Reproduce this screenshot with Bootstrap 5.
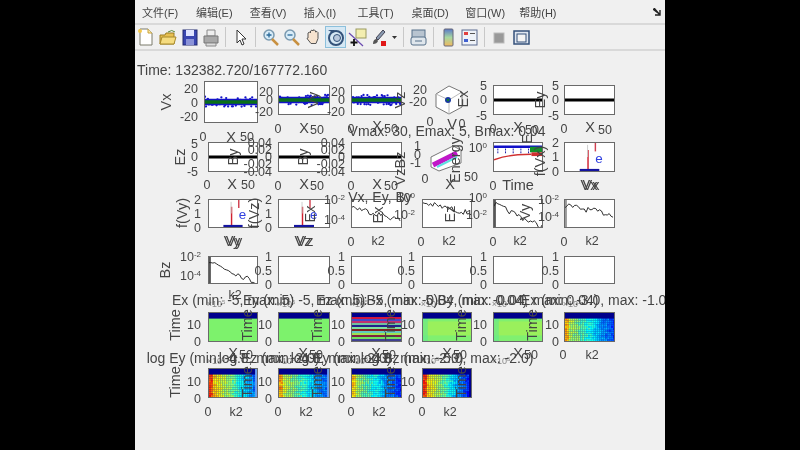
<!DOCTYPE html>
<html lang="zh">
<head>
<meta charset="UTF-8">
<title>Figure</title>
<link href="https://cdn.jsdelivr.net/npm/bootstrap@5.3.0/dist/css/bootstrap.min.css" rel="stylesheet">
<style>
  html, body { height: 100%; background: #000; overflow: hidden; }
  .fig-window { width: 530px; height: 450px; background: #f0f0f0; filter: blur(.5px); overflow: hidden; color: #3c3c3c; font-family: "Liberation Sans", Arial, sans-serif; }
  .fig-menu { height: 25px; padding-left: 7px; border-bottom: 2px solid #d9d9d9; font: 11px "Liberation Sans", "Noto Sans CJK SC", sans-serif; color: #444; }
  .fig-menu span { width: 53.9px; flex: none; }
  .fig-arrow { margin-left: auto; margin-right: 4px; }
  .fig-tools { height: 26px; padding-left: 0; border-bottom: 2px solid #d9d9d9; }
  .tool-btn { width: 21.7px; height: 22px; flex: none; }
  .tool-on { background: #d6e8f4; outline: 1px solid #8cc0dc; outline-offset: -1px; }
  .tool-gap { width: 1px; height: 20px; background: #c8c8c8; flex: none; margin: 0 3.5px; }
  .fig-canvas { height: 399px; }
  .lbl { position: absolute; white-space: nowrap; line-height: 1; color: #444; }
  .lbl sup { font-size: 8px; top: -.5em; }
  .lbl-tick { font-size: 12.5px; }
  .lbl-axis { font-size: 14.5px; }
  .lbl-title { font-size: 14px; }
  .lbl-exp { font-size: 9px; color: #888; }
  .lbl-exp sup { font-size: 6px; }
  .ax { position: absolute; background: #fff; border: 1.5px solid #6a6a6a; }
  .ax svg { display: block; width: 100%; height: 100%; }
</style>
</head>
<body class="d-flex justify-content-center">
<div class="fig-window">
  <div class="fig-menu d-flex align-items-center">
    <span>文件(F)</span><span>编辑(E)</span><span>查看(V)</span><span>插入(I)</span><span>工具(T)</span><span>桌面(D)</span><span>窗口(W)</span><span>帮助(H)</span>
    <svg class="fig-arrow" width="8" height="8" viewBox="0 0 8 8"><path d="M0 1 L5 5 M1 0 L7 7 M7 2 V7 H2" stroke="#222" stroke-width="1.4" fill="none"/></svg>
  </div>
  <div class="fig-tools d-flex align-items-center" id="tools"></div>
  <div class="fig-canvas position-relative" id="canvas"></div>
</div>
<script>
  // toolbar icons
  const icons = [
    '<path d="M5 2h8l4 4v12H5z" fill="#fff" stroke="#7a7a6a"/><path d="M13 2v4h4" fill="#ffe9a0" stroke="#c9a23a"/><circle cx="5" cy="4" r="2" fill="#f2c84b"/>',
    '<path d="M3 8h5l1-2h8v11H3z" fill="#e8c050" stroke="#9a7c22"/><path d="M3 17l2-7h14l-2 7z" fill="#f5dc80" stroke="#a88a2a"/><path d="M11 5q4-3 7 0" stroke="#5a8a3a" fill="none"/>',
    '<rect x="4" y="3" width="14" height="15" fill="#3a46b0" stroke="#222a70"/><rect x="7" y="3" width="8" height="6" fill="#dfe4ff"/><rect x="7" y="12" width="8" height="6" fill="#8b93d8"/>',
    '<path d="M7 3h8v6H7z" fill="#eee" stroke="#888"/><path d="M4 9h14v7H4z" fill="#a8a8a8" stroke="#777"/><path d="M6 16h10v3H6z" fill="#ddd" stroke="#888"/>',
    'gap',
    '<path d="M7 3v13l3-3 2 5 2-1-2-5h4z" fill="#fff" stroke="#333"/>',
    'gap',
    '<circle cx="9" cy="8" r="5" fill="#d8ecf8" stroke="#7a9ab0" stroke-width="1.5"/><path d="M12 12l6 6" stroke="#c89040" stroke-width="2.5"/><path d="M6.5 8h5M9 5.5v5" stroke="#2a6a9a" stroke-width="1.3"/>',
    '<circle cx="9" cy="8" r="5" fill="#d8ecf8" stroke="#7a9ab0" stroke-width="1.5"/><path d="M12 12l6 6" stroke="#c89040" stroke-width="2.5"/><path d="M6.5 8h5" stroke="#2a6a9a" stroke-width="1.3"/>',
    '<path d="M5 11V6l1.500-1 1 1V4l1.500-1 1 1v-1l1.500 0 1 1v1l1.500-.5 1 1v6l-2 5H8l-4-5z" fill="#f6e3cf" stroke="#555"/>',
    '<circle cx="11" cy="11" r="7" fill="none" stroke="#33527a" stroke-width="2"/><circle cx="12" cy="11" r="3.500" fill="#b8c8dc" stroke="#33527a"/><path d="M3 3h7l-2 3z" fill="#33527a"/>',
    '<rect x="9" y="2" width="10" height="9" fill="#f3eeb0" stroke="#9a9a60"/><path d="M2 6l14 13" stroke="#6a4ab0" stroke-width="1.2"/><path d="M7 12v7M3.500 15.500h7" stroke="#111" stroke-width="1.800"/>',
    '<path d="M15 3L8 11l2 2 7-8z" fill="#8a9ab0" stroke="#445"/><path d="M5 17q0-5 4-5l1 2q-1 3-5 3z" fill="#555"/><rect x="13" y="14" width="5" height="5" fill="#e01818"/>',
    'drop',
    'gap',
    '<rect x="4" y="3" width="13" height="11" fill="#b8c4d0" stroke="#56708a"/><rect x="3" y="10" width="15" height="8" rx="2" fill="#dfe6ec" stroke="#56708a"/><path d="M7 14h7" stroke="#56708a"/>',
    'gap',
    '<defs><linearGradient id="cb" x1="0" y1="0" x2="0" y2="1"><stop offset="0" stop-color="#5a78c8"/><stop offset=".5" stop-color="#a8d8a0"/><stop offset="1" stop-color="#f0b860"/></linearGradient></defs><rect x="6" y="2" width="9" height="17" rx="1" fill="url(#cb)" stroke="#667"/>',
    '<rect x="3" y="3" width="15" height="15" fill="#eef2f8" stroke="#5a6a90"/><rect x="5" y="5" width="4" height="3" fill="#e04040"/><rect x="5" y="12" width="4" height="3" fill="#4060d0"/><path d="M11 6.500h5M11 13.500h5" stroke="#555"/>',
    'gap',
    '<rect x="5" y="6" width="10" height="10" fill="#999" stroke="#bbb"/>',
    '<rect x="3" y="4" width="15" height="13" fill="#dfe6f0" stroke="#34507a" stroke-width="1.500"/><rect x="6" y="7" width="9" height="8" fill="#f4f4f4" stroke="#34507a"/>'
  ];
  document.getElementById('tools').innerHTML = icons.map((d, i) => {
    if (d === 'gap') return '<div class="tool-gap"></div>';
    if (d === 'drop') return '<svg width="10" height="22" viewBox="0 0 10 22"><path d="M2 10h5l-2.500 3z" fill="#333"/></svg>';
    return `<div class="tool-btn d-flex align-items-center justify-content-center ${i === 10 ? 'tool-on' : ''}"><svg width="21" height="21" viewBox="0 0 21 21">${d}</svg></div>`;
  }).join('');

  // page coordinates of the figure canvas
  const OX = 135, OY = 51;
  const canvas = document.getElementById('canvas');
  let seed = 7;
  const rnd = () => (seed = (seed * 16807) % 2147483647) / 2147483647;

  function jet(v) {
    v = Math.max(0, Math.min(1, v));
    const c = t => Math.round(255 * Math.max(0, Math.min(1, 1.5 - Math.abs(4 * v - t))));
    return `rgb(${c(3)},${c(2)},${c(1)})`;
  }

  function heat(w, h, strength, fall, edge) {
    let s = `<rect width="${w}" height="${h}" fill="#00008c"/>`;
    for (let x = 0; x < w; x += 2) for (let y = 6; y < h; y += 2) {
      const v = strength - fall * x / w + (rnd() - .5) * .1 + (x < 3 ? .1 : 0);
      s += `<rect x="${x}" y="${y}" width="2" height="2" fill="${jet(v)}"/>`;
    }
    return s + (edge ? `<rect x="${w - 2}" width="2" height="${h}" fill="${edge}"/>` : '');
  }

  function logLine(w, h, y0, y1) {
    const pts = [];
    for (let x = 0; x <= w; x += 2) pts.push(`${x},${(y0 + (y1 - y0) * x / w + (rnd() - .5) * 6).toFixed(1)}`);
    return `<polyline points="${pts.join(' ')}" fill="none" stroke="#222" stroke-width="1"/>`;
  }

  const plots = {
    dots(w, h) {
      let s = `<path d="M0 ${h / 2}H${w}" stroke="#1414c8" stroke-width="7"/>`;
      for (let x = 0; x < w; x += 1) s += `<circle cx="${x}" cy="${h / 2 + (rnd() - .5) * 11}" r="1.200" fill="#1414c8"/>`;
      return s + `<path d="M0 ${h / 2}H${w}" stroke="#0a7018" stroke-width="3.500"/>`;
    },
    flat: (w, h) => `<path d="M0 ${h / 2}H${w}" stroke="#000" stroke-width="3"/>`,
    blank: () => '',
    hist: (w, h) => `<path d="M${w * .47} ${h}V${h * .25}" stroke="#d02030" stroke-width="1.500"/><path d="M${w * .47 - .5} ${h * .5}V2" stroke="#ccc" stroke-width="1"/><path d="M${w * .62} 0V${h * .3}" stroke="#d04050" stroke-width="1.500"/><path d="M${w * .3} ${h - 1}H${w * .7}" stroke="#1414a0" stroke-width="2.500"/><text x="${w * .62}" y="${h * .72}" font-size="14" fill="#3040e0" font-family="Liberation Sans">e</text>`,
    energy: (w, h) => `<path d="M0 4H${w}" stroke="#1010c8" stroke-width="2.500"/><path d="M${w * .75} 4H${w}V10H${w * .75}z" fill="#12902a"/><path d="M${w * .78} 10H${w}V14H${w * .78}z" fill="#d03030"/><path d="M0 18Q${w * .3} 12 ${w * .78} 12" stroke="#d03030" fill="none" stroke-width="1.500"/><path d="M4 6v6M12 6v6M20 6v6M28 6v6M36 6v6" stroke="#1010a0" stroke-dasharray="2 1"/>`,
    log: (w, h) => logLine(w, h, h * .25, h * .75),
    log2: (w, h) => logLine(w, h, h * .1, h * .5),
    log3: (w, h) => `<path d="M1 0V${h}" stroke="#222" stroke-width="1.500"/>` + logLine(w, h, h * .15, h * 1),
    log4: (w, h) => `<path d="M1 0V${h}" stroke="#999" stroke-width="2"/>` + logLine(w, h, h * .2, h * .55),
    green: (w, h) => `<rect width="${w}" height="${h}" fill="#7df26c"/><rect width="${w}" height="6" fill="#00008c"/>`,
    green2: (w, h) => `<rect width="${w}" height="${h}" fill="#80f070"/><rect y="${h * .3}" width="${w}" height="${h * .5}" fill="#a0f058" opacity=".8"/><rect x="0" width="5" height="${h}" fill="#60e890" opacity=".6"/><rect width="${w}" height="6" fill="#00008c"/>`,
    stripes(w, h) {
      const c = ['#00008c', '#00008c', '#d01840', '#4848c8', '#c03070', '#70c0a0', '#20208c', '#80e0a0', '#802020', '#60c8c0', '#a0e050', '#802040', '#70e060', '#404090'];
      return c.map((f, i) => `<rect y="${i * h / c.length}" width="${w}" height="${h / c.length + .5}" fill="${f}"/>`).join('');
    },
    heat1: (w, h) => heat(w, h, .72, .5, '#6aa0f0'),
    heat2: (w, h) => heat(w, h, .62, .42, '#6aa0f0'),
    heat3: (w, h) => heat(w, h, .58, .42),
    heat4: (w, h) => heat(w, h, .72, .6, '#00008c'),
    heat6: (w, h) => heat(w, h, .6, .42),
    cube: (w, h) => `<path d="M2 9L15 1L28 7V22L15 29L2 22z" fill="#fff" stroke="#777"/><path d="M2 9L15 15L28 7M15 15V29" fill="none" stroke="#bbb"/><circle cx="14" cy="15" r="3" fill="#1a3aa0"/><circle cx="14" cy="15" r="1.200" fill="#108030"/>`,
    cube2: (w, h) => `<path d="M2 12L24 1L32 5V18L10 26L2 22z" fill="#fff" stroke="#777"/><path d="M4 20L28 8" stroke="#c018c8" stroke-width="5"/><path d="M8 22L28 12" stroke="#60e0e0" stroke-width="2"/>`
  };

  // [left, top, right, bottom, plot]
  const axes = [
    [204, 81, 258, 123, 'dots'], [278, 85, 330, 115, 'dots'], [351, 85, 402, 115, 'dots'], [493, 85, 543, 115, 'flat'], [564, 85, 615, 115, 'flat'],
    [208, 142, 258, 172, 'flat'], [278, 142, 330, 172, 'flat'], [351, 142, 402, 172, 'flat'], [493, 142, 543, 172, 'energy'], [564, 142, 615, 172, 'hist'],
    [208, 199, 258, 228, 'hist'], [278, 199, 330, 228, 'hist'], [351, 199, 402, 228, 'log'], [422, 199, 472, 228, 'log2'], [493, 199, 543, 228, 'log3'], [564, 199, 615, 228, 'log4'],
    [208, 256, 258, 284, 'log3'], [278, 256, 330, 284, 'blank'], [351, 256, 402, 284, 'blank'], [422, 256, 472, 284, 'blank'], [493, 256, 543, 284, 'blank'], [564, 256, 615, 284, 'blank'],
    [208, 312, 258, 342, 'green'], [278, 312, 330, 342, 'green'], [351, 312, 402, 342, 'stripes'], [422, 312, 472, 342, 'green2'], [493, 312, 543, 342, 'green2'], [564, 312, 615, 342, 'heat6'],
    [208, 368, 258, 398, 'heat1'], [278, 368, 330, 398, 'heat2'], [351, 368, 402, 398, 'heat3'], [422, 368, 472, 398, 'heat4']
  ];

  let html = '';
  axes.forEach(([l, t, r, b, p]) => {
    const w = r - l, h = b - t;
    html += `<div class="ax" style="left:${l - OX}px;top:${t - OY}px;width:${w}px;height:${h}px"><svg viewBox="0 0 ${w} ${h}" preserveAspectRatio="none">${plots[p](w, h)}</svg></div>`;
  });
  // 3D axes have no box of their own
  const bare = (l, t, w, h, p) => `<svg class="position-absolute" style="left:${l - OX}px;top:${t - OY}px" width="${w}" height="${h}" viewBox="0 0 ${w} ${h}">${plots[p](w, h)}</svg>`;
  html += bare(434, 85, 30, 30, 'cube') + bare(429, 145, 34, 27, 'cube2');

  // [text, x, y, align: c centre / r right / l left, rotate]
  const L = [
    ['Time: 132382.720/167772.160', 137, 70, 'l'],
    ['Vx', 166, 102, 'c', 1], ['20', 198, 89, 'r'], ['0', 198, 103, 'r'], ['-20', 198, 117, 'r'], ['0', 203, 137, 'c'], ['X', 231, 137, 'c'], ['50', 247, 137, 'c'],
    ['20', 273, 92, 'r'], ['0', 273, 100, 'r'], ['-20', 273, 112, 'r'], ['Vy', 313, 100, 'c', 1], ['0', 278, 129, 'c'], ['X', 304, 128, 'c'], ['50', 317, 130, 'c'],
    ['20', 345, 92, 'r'], ['0', 345, 100, 'r'], ['-20', 345, 112, 'r'], ['Vz', 400, 100, 'c', 1], ['0', 351, 129, 'c'], ['X', 377, 126, 'c'], ['50', 391, 129, 'c'],
    ['20', 427, 90, 'r'], ['-20', 427, 102, 'r'], ['Ex', 463, 99, 'c', 1], ['0', 430, 122, 'c'], ['V', 452, 124, 'c'], ['0', 462, 124, 'c'],
    ['5', 487, 86, 'r'], ['0', 487, 100, 'r'], ['-5', 487, 116, 'r'], ['Ey', 540, 100, 'c', 1], ['0', 493, 129, 'c'], ['X', 518, 127, 'c'], ['50', 532, 130, 'c'],
    ['5', 559, 86, 'r'], ['0', 559, 100, 'r'], ['-5', 559, 116, 'r'], ['0', 564, 129, 'c'], ['X', 590, 127, 'c'], ['50', 605, 130, 'c'],
    ['Vmax: 30, Emax: 5, Bmax: 0.04', 447, 131, 'c'],
    ['Ez', 180, 157, 'c', 1], ['5', 198, 144, 'r'], ['0', 198, 157, 'r'], ['-5', 198, 172, 'r'], ['By', 233, 157, 'c', 1], ['0', 207, 185, 'c'], ['X', 232, 184, 'c'], ['50', 248, 185, 'c'],
    ['0.04', 272, 143, 'r'], ['0.02', 272, 150, 'r'], ['0', 272, 157, 'r'], ['-0.02', 272, 164, 'r'], ['-0.04', 272, 172, 'r'], ['By', 303, 157, 'c', 1], ['0', 278, 186, 'c'], ['X', 304, 184, 'c'], ['50', 317, 186, 'c'],
    ['0.04', 345, 143, 'r'], ['0.02', 345, 150, 'r'], ['0', 345, 157, 'r'], ['-0.02', 345, 164, 'r'], ['-0.04', 345, 172, 'r'], ['Bz', 400, 160, 'c', 1], ['Vz', 400, 177, 'c', 1], ['0', 351, 186, 'c'], ['X', 377, 184, 'c'], ['50', 391, 186, 'c'],
    ['1', 421, 146, 'r'], ['0', 421, 155, 'r'], ['-1', 421, 163, 'r'], ['Energy', 455, 160, 'c', 1], ['0', 425, 179, 'c'], ['X', 450, 184, 'c'], ['50', 471, 177, 'c'],
    ['10<sup>0</sup>', 487, 148, 'r'], ['f(Vx)', 540, 161, 'c', 1], ['E', 527, 139, 'c', 1], ['0', 493, 186, 'c'], ['Time', 518, 185, 'c'],
    ['2', 559, 143, 'r'], ['1', 559, 157, 'r'], ['0', 559, 172, 'r'], ['Vx', 589, 185, 'c'], ['Vx', 591, 185, 'c'],
    ['f(Vy)', 182, 213, 'c', 1], ['2', 201, 200, 'r'], ['1', 201, 214, 'r'], ['0', 201, 228, 'r'], ['Vy', 232, 241, 'c'], ['Vy', 234, 241, 'c'],
    ['f(Vz)', 254, 213, 'c', 1], ['2', 272, 200, 'r'], ['1', 272, 214, 'r'], ['0', 272, 228, 'r'], ['Vz', 303, 241, 'c'], ['Vz', 305, 241, 'c'], ['Ex', 310, 214, 'c', 1],
    ['10<sup>-2</sup>', 345, 200, 'r'], ['10<sup>-4</sup>', 345, 220, 'r'], ['Vx, Ey, By', 380, 197, 'c'], ['Ex', 378, 215, 'c', 1], ['0', 351, 242, 'c'], ['k2', 378, 241, 'c'],
    ['10<sup>0</sup>', 415, 198, 'r'], ['10<sup>-2</sup>', 415, 215, 'r'], ['Ez', 450, 214, 'c', 1], ['0', 421, 242, 'c'], ['k2', 449, 241, 'c'],
    ['10<sup>0</sup>', 487, 198, 'r'], ['10<sup>-2</sup>', 487, 215, 'r'], ['Vy', 525, 212, 'c', 1], ['0', 493, 242, 'c'], ['k2', 520, 241, 'c'],
    ['10<sup>-2</sup>', 559, 200, 'r'], ['10<sup>-4</sup>', 559, 217, 'r'], ['0', 564, 242, 'c'], ['k2', 592, 241, 'c'],
    ['Bz', 165, 270, 'c', 1], ['10<sup>-2</sup>', 201, 257, 'r'], ['10<sup>-4</sup>', 201, 276, 'r'], ['k2', 235, 295, 'c']
  ];
  [272, 345, 415, 487, 559].forEach(x => L.push(['1', x, 257, 'r'], ['0.5', x, 271, 'r'], ['0', x, 285, 'r']));
  [208, 278, 351, 422, 493, 564].forEach(x => L.push(['&times;10<sup>5</sup>', x + 8, 304, 'c']));
  [208, 278, 351, 422, 493].forEach(x => L.push(['&times;10<sup>5</sup>', x + 8, 361, 'c']));
  ['Ex (min: -5, max: 5)', 'Ey (min: -5, max: 5)', 'Ez (min: -5, max: 5)', 'Bx (min: -0.04, max: 0.04)', 'By (min: -0.04, max: 0.04)'].forEach((t, i) => L.push([t, [233, 304, 377, 447, 518][i], 300, 'c']));
  L.push(['Ex (min: -3.0, max: -1.0)', 596, 300, 'c']);
  // time/heatmap rows
  [[201, 208], [272, 278], [345, 351], [415, 422], [487, 493], [559, 564]].forEach(([r, l], i) => {
    L.push(['10', r, 325, 'r'], ['0', r, 342, 'r']);
    if (i < 5) L.push(['Time', l + 39, 325, 'c', 1], ['X', l + 25, 353, 'c'], ['50', l + 38, 355, 'c']);
    else L.push(['0', l - 1, 355, 'c'], ['k2', l + 28, 355, 'c']);
    if (i < 4) L.push(['10', r, 382, 'r'], ['0', r, 399, 'r'], ['Time', l + 39, 382, 'c', 1], ['0', l, 412, 'c'], ['k2', l + 28, 412, 'c']);
  });
  L.push(['Time', 175, 325, 'c', 1], ['Time', 175, 382, 'c', 1]);
  ['log Ey (min: -4.8, max: -2.0)', 'log Ez (min: -4.8, max: -2.0)', 'log Ey (min: -4.8, max: -2.0)', 'log Bz (min: -5.0, max: -2.0)'].forEach((t, i) => L.push([t, [233, 305, 377, 447][i], 358, 'c']));

  const shift = { c: '-50%', r: '-100%', l: '0' };
  const sizeClass = t => t.includes('&times;') ? 'lbl-exp' : (t === 'k2' || /^[-0-9.]+$/.test(t) || t.includes('<sup>')) ? 'lbl-tick' : t.length > 6 ? 'lbl-title' : 'lbl-axis';
  L.forEach(([t, x, y, a, rot]) => {
    const tr = `translate(${shift[a]},-50%)` + (rot ? ' rotate(-90deg)' : '');
    html += `<span class="lbl ${sizeClass(t)}" style="left:${x - OX}px;top:${y - OY}px;transform:${tr}">${t}</span>`;
  });
  canvas.innerHTML = html;
</script>
<script src="https://cdn.jsdelivr.net/npm/bootstrap@5.3.0/dist/js/bootstrap.bundle.min.js"></script>
</body>
</html>
